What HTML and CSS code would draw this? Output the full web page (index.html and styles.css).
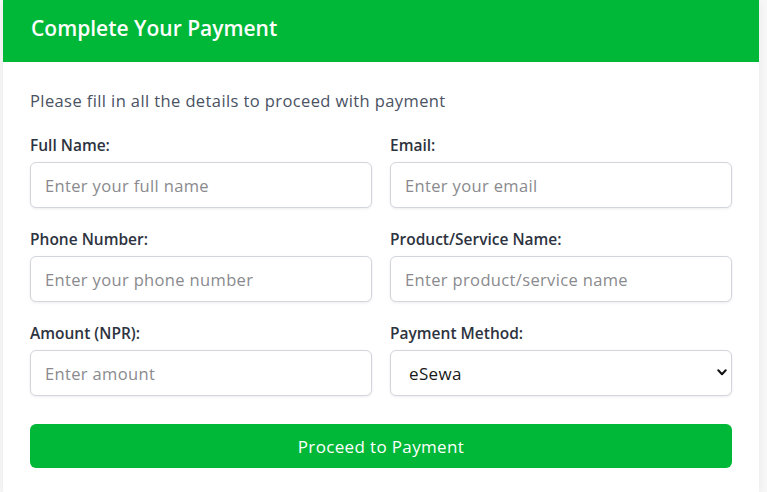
FILE: index.html
```html
<!DOCTYPE html>
<html lang="en">
<head>
<meta charset="utf-8">
<title>Complete Your Payment</title>
<link rel="stylesheet" href="styles.css">
</head>
<body>
<div class="card">
  <div class="card-header">
    <h1 class="title">Complete Your Payment</h1>
  </div>
  <div class="card-body">
    <p class="intro">Please fill in all the details to proceed with payment</p>
    <form class="form">
      <div class="grid">
        <div class="field">
          <label class="label" for="name">Full Name:</label>
          <input class="input" id="name" type="text" placeholder="Enter your full name">
        </div>
        <div class="field">
          <label class="label" for="email">Email:</label>
          <input class="input" id="email" type="email" placeholder="Enter your email">
        </div>
        <div class="field">
          <label class="label" for="phone">Phone Number:</label>
          <input class="input" id="phone" type="text" placeholder="Enter your phone number">
        </div>
        <div class="field">
          <label class="label" for="product">Product/Service Name:</label>
          <input class="input" id="product" type="text" placeholder="Enter product/service name">
        </div>
        <div class="field">
          <label class="label" for="amount">Amount (NPR):</label>
          <input class="input" id="amount" type="text" placeholder="Enter amount">
        </div>
        <div class="field">
          <label class="label" for="method">Payment Method:</label>
          <div class="select-wrap">
            <select class="input select" id="method">
              <option>eSewa</option>
              <option>Khalti</option>
            </select>
            <svg class="chev" width="10" height="7" viewBox="0 0 10 7"><path d="M1.3 1.3 L5 5.2 L8.7 1.3" fill="none" stroke="#111" stroke-width="2" stroke-linecap="round" stroke-linejoin="round"/></svg>
          </div>
        </div>
      </div>
      <button class="btn" type="button">Proceed to Payment</button>
    </form>
  </div>
</div>
</body>
</html>
```
FILE: styles.css
```css
* { box-sizing: border-box; }
html, body { margin: 0; padding: 0; }
body {
  background: #f7f7f8;
  font-family: "Open Sans", "Noto Sans", sans-serif;
  padding: 0 8px 0 3px;
}
.card {
  background: #fff;
  box-shadow: 0 2px 8px rgba(0,0,0,0.06);
  min-height: 492px;
}
.card-header {
  background: #00b837;
  height: 62px;
  display: flex;
  align-items: center;
  padding: 0 28px 6px;
}
.title {
  margin: 0;
  color: #fff;
  font-size: 21px;
  font-weight: 600;
  line-height: 28px;
}
.card-body {
  padding: 28px 27px 24px;
}
.intro {
  margin: 0 0 23px;
  font-size: 16.5px;
  letter-spacing: 0.4px;
  color: #4a5263;
  line-height: 22px;
}
.grid {
  display: grid;
  grid-template-columns: 1fr 1fr;
  column-gap: 18px;
  row-gap: 21px;
}
.field { display: flex; flex-direction: column; }
.label {
  font-size: 15.5px;
  font-weight: 600;
  color: #2d3340;
  line-height: 20px;
  margin-bottom: 7px;
}
.input {
  height: 46px;
  border: 1px solid #d3d5dc;
  border-radius: 6px;
  padding: 0 14px;
  font-family: inherit;
  font-size: 16.5px;
  letter-spacing: 0.35px;
  color: #111;
  background: #fff;
  box-shadow: 0 1px 3px rgba(0,0,0,0.08);
  outline: none;
  width: 100%;
}
.input::placeholder { color: #8a8a8e; }
.select-wrap { position: relative; }
.select {
  appearance: none;
  -webkit-appearance: none;
  color: #1a1a1a;
  font-size: 17px;
  padding-left: 18px;
}
.chev {
  position: absolute;
  right: 5px;
  top: 19px;
  pointer-events: none;
}
.btn {
  margin-top: 28px;
  width: 100%;
  height: 44px;
  border: none;
  border-radius: 6px;
  background: #00b837;
  color: #fff;
  font-family: inherit;
  font-size: 17px;
  letter-spacing: 0.35px;
  font-weight: 400;
}
```
